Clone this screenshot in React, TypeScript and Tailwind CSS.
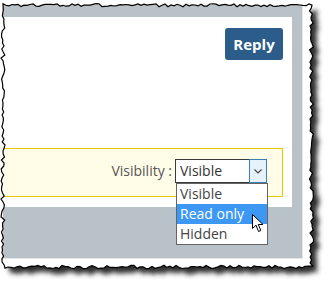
import React from "react";

// seeded jitter so the torn edge is the same on every render
function makeRand(seed: number) {
    let s = seed;
    return () => {
        s = (s * 16807) % 2147483647;
        return (s - 1) / 2147483646;
    };
}

function tornPoints() {
    const r = makeRand(42);
    const pts: string[] = [];
    for (let x = 3; x <= 312; x += 3) pts.push(`${x},${(5.5 + (r() - 0.6) * 3).toFixed(1)}`);
    for (let y = 8; y <= 266; y += 3) pts.push(`${(311.5 + (r() - 0.5) * 4).toFixed(1)},${y}`);
    for (let x = 311; x >= 4; x -= 3) pts.push(`${x},${(267 + (r() - 0.5) * 3.5).toFixed(1)}`);
    for (let y = 265; y >= 8; y -= 3) pts.push(`${(3 + (r() - 0.5) * 4).toFixed(1)},${y}`);
    return pts;
}

function TornFrame() {
    const pts = React.useMemo(tornPoints, []);
    const poly = pts.join(" ");
    return (
        <svg className="absolute inset-0 pointer-events-none" width="333" height="290" viewBox="0 0 333 290">
            <defs>
                <filter id="blur" x="-10%" y="-10%" width="120%" height="120%">
                    <feGaussianBlur stdDeviation="2.5" />
                </filter>
                <mask id="outside">
                    <rect width="333" height="290" fill="white" />
                    <polygon points={poly} fill="black" />
                </mask>
            </defs>
            <path fillRule="evenodd" fill="white" d={`M0 0H333V290H0Z M${pts.join(" L")}Z`} />
            <g mask="url(#outside)">
                <polygon points={poly} transform="translate(6,6)" fill="#2e2e2e" filter="url(#blur)" />
            </g>
            <polygon points={poly} fill="none" stroke="#000" strokeWidth="1.2" />
        </svg>
    );
}

function Cursor() {
    return (
        <svg className="absolute left-[75px] top-[30px]" width="13" height="19" viewBox="0 0 13 19">
            <path d="M0.5 0.5 L0.5 14.5 L4 11.2 L6.5 17.5 L8.8 16.5 L6.3 10.5 L11 10.5 Z" fill="white" stroke="black" strokeWidth="1" strokeLinejoin="round" />
        </svg>
    );
}

export default function App() {
    const options = ["Visible", "Read only", "Hidden"];
    return (
        <div className="relative w-[333px] h-[290px] bg-white overflow-hidden font-['Open_Sans',sans-serif]">
            <div className="ml-[3px] mt-[5px] w-[300px] h-[254px] bg-[#b9c1c9] border-r border-b border-[#e4e7ea] pt-[12px] pr-[10px]">
                <div className="relative h-[190px] bg-white pt-[11px] pr-[9px] flex flex-col">
                    <div className="flex justify-end">
                        <button className="w-[58px] h-[32px] rounded-[3px] bg-[#2b5c8a] text-white font-bold text-[15px] leading-none">
                            Reply
                        </button>
                    </div>
                    <div className="mt-[88px] h-[49px] border-y border-r border-[#e2c800] bg-[#fffde8] flex items-start justify-end pt-[10px] pr-[15px]">
                        <span className="text-[14px] text-[#555] leading-[24px] mr-[3px]">Visibility :</span>
                        <div className="relative w-[92px] h-[24px] flex">
                            <div className="flex-1 border border-r-0 border-[#3a3a3a] bg-white text-[14px] text-[#333] leading-[22px] pl-[4px]">
                                Visible
                            </div>
                            <div className="w-[18px] border border-[#3c7fb1] bg-[#e5f1fb] flex items-center justify-center">
                                <svg width="8" height="5" viewBox="0 0 8 5">
                                    <path d="M0.5 0.5 L4 4 L7.5 0.5" fill="none" stroke="#444" strokeWidth="1.1" />
                                </svg>
                            </div>
                            <div className="absolute top-full left-[1px] w-[92px] border border-[#646464] bg-white py-[0px] z-10">
                                {options.map((o, i) => (
                                    <div
                                        key={o}
                                        className={`h-[20px] text-[14px] leading-[20px] pl-[3px] ${i === 1 ? "bg-[#3d98f4] text-white" : "text-[#444]"}`}
                                    >
                                        {o}
                                    </div>
                                ))}
                                <Cursor />
                            </div>
                        </div>
                    </div>
                </div>
            </div>
            <TornFrame />
        </div>
    );
}
